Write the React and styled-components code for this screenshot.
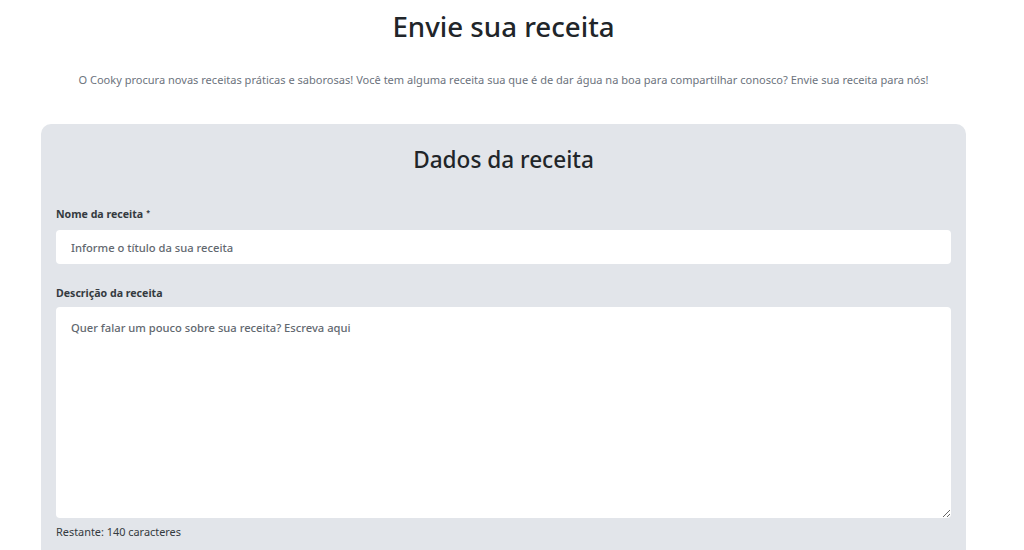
import React, { useState } from "react";
import styled, { createGlobalStyle } from "styled-components";

const Global = createGlobalStyle`
  html, body { margin: 0; padding: 0; background: #ffffff; }
  body { font-family: "Noto Sans", "Open Sans", Arial, sans-serif; color: #212529; }
  * { box-sizing: border-box; }
`;

const Page = styled.div`
  width: 1007px;
  padding-top: 8px;
`;

const Title = styled.h1`
  margin: 0;
  text-align: center;
  font-size: 27.7px;
  line-height: 36px;
  font-weight: 500;
  color: #212529;
`;

const Intro = styled.p`
  margin: 28px 0 0;
  text-align: center;
  font-size: 11.05px;
  line-height: 16px;
  color: #6c737d;
`;

const Card = styled.section`
  margin: 36px 41px 0;
  background: #e2e5ea;
  border-radius: 10px;
  padding: 20px 15px 30px;
`;

const CardTitle = styled.h2`
  margin: 0 0 30px;
  text-align: center;
  font-size: 22.6px;
  line-height: 32px;
  font-weight: 500;
  color: #212529;
`;

const Field = styled.div`
  display: flex;
  flex-direction: column;
  margin-bottom: ${(p) => p.$gap || 0}px;
`;

const Label = styled.label`
  font-size: 10.6px;
  line-height: 16px;
  font-weight: 700;
  color: #343a40;
  margin-bottom: ${(p) => p.$space ?? 8}px;
`;

const Required = styled.span`
  font-size: 7px;
  line-height: 1;
  vertical-align: 3px;
  margin-left: 3px;
  color: #343a40;
`;

const Input = styled.input`
  height: 34px;
  border: none;
  border-radius: 4px;
  background: #ffffff;
  padding: 0 15px;
  font-family: inherit;
  font-size: 11.2px;
  font-weight: 500;
  color: #212529;
  outline: none;
  &::placeholder { color: #62686f; }
`;

const TextArea = styled.textarea`
  height: 211px;
  border: none;
  border-radius: 4px;
  background: #ffffff;
  padding: 13px 15px;
  font-family: inherit;
  font-size: 11.2px;
  font-weight: 500;
  line-height: 16px;
  color: #212529;
  outline: none;
  resize: vertical;
  &::placeholder { color: #62686f; }
`;

const Counter = styled.div`
  margin-top: 6px;
  font-size: 10.9px;
  line-height: 16px;
  color: #343a40;
`;

export default function App() {
  const [desc, setDesc] = useState("");
  return (
    <Page>
      <Global />
      <Title>Envie sua receita</Title>
      <Intro>
        O Cooky procura novas receitas práticas e saborosas! Você tem alguma receita sua que é de dar água na boa para compartilhar conosco? Envie sua receita para nós!
      </Intro>
      <Card>
        <CardTitle>Dados da receita</CardTitle>
        <Field $gap={21}>
          <Label htmlFor="nome">
            Nome da receita<Required>*</Required>
          </Label>
          <Input id="nome" placeholder="Informe o título da sua receita" />
        </Field>
        <Field>
          <Label htmlFor="desc" $space={6}>Descrição da receita</Label>
          <TextArea
            id="desc"
            maxLength={140}
            value={desc}
            onChange={(e) => setDesc(e.target.value)}
            placeholder="Quer falar um pouco sobre sua receita? Escreva aqui"
          />
        </Field>
        <Counter>Restante: {140 - desc.length} caracteres</Counter>
      </Card>
    </Page>
  );
}
